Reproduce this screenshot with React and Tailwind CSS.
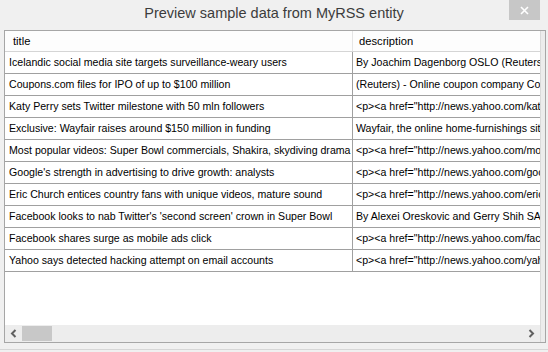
const rows = [
  ["Icelandic social media site targets surveillance-weary users", "By Joachim Dagenborg OSLO (Reuters) - An Icelandic social media site"],
  ["Coupons.com files for IPO of up to $100 million", "(Reuters) - Online coupon company Coupons.com Inc filed"],
  ["Katy Perry sets Twitter milestone with 50 mln followers", '<p><a href="http://news.yahoo.com/katy-perry-sets-twitter'],
  ["Exclusive: Wayfair raises around $150 million in funding", "Wayfair, the online home-furnishings site, has raised"],
  ["Most popular videos: Super Bowl commercials, Shakira, skydiving drama", '<p><a href="http://news.yahoo.com/most-popular-videos'],
  ["Google's strength in advertising to drive growth: analysts", '<p><a href="http://news.yahoo.com/googles-strength'],
  ["Eric Church entices country fans with unique videos, mature sound", '<p><a href="http://news.yahoo.com/eric-church-entices'],
  ["Facebook looks to nab Twitter's 'second screen' crown in Super Bowl", "By Alexei Oreskovic and Gerry Shih SAN FRANCISCO"],
  ["Facebook shares surge as mobile ads click", '<p><a href="http://news.yahoo.com/facebook-shares-surge'],
  ["Yahoo says detected hacking attempt on email accounts", '<p><a href="http://news.yahoo.com/yahoo-says-detected'],
];

export default function App() {
  return (
    <div className="w-[548px] h-[352px] bg-[#f0f0f0] relative overflow-hidden font-['Liberation_Sans',Arial,sans-serif]">
      {/* title bar */}
      <div className="h-[30px] flex items-center justify-center text-[14.5px] text-[#3c3c3c] pb-[2px]">
        Preview sample data from MyRSS entity
      </div>
      <div className="absolute top-0 right-[8px] w-[31px] h-[20px] bg-[#c7c7c7] flex items-center justify-center">
        <svg width="9" height="9" viewBox="0 0 9 9">
          <path d="M1 1 L8 8 M8 1 L1 8" stroke="#ffffff" strokeWidth="1.6" />
        </svg>
      </div>

      {/* grid */}
      <div className="ml-[4px] w-[542px] h-[313px] border border-[#a6a6a6] flex">
        <div className="w-[535px] flex flex-col min-w-0">
          <div className="flex-1 bg-white overflow-hidden text-[10.6px] text-black">
            <div className="flex h-[21px] bg-[#fdfdfd] border-b border-[#d5d5d5] text-[11.2px]">
              <div className="w-[348px] shrink-0 border-r border-[#e5e5e5] pl-[8px] flex items-center">title</div>
              <div className="flex-1 min-w-0 pl-[6px] flex items-center">description</div>
            </div>
            {rows.map((r, i) => (
              <div key={i} className="flex h-[22px] border-b border-[#a0a0a0]">
                <div className="w-[348px] shrink-0 border-r border-[#a0a0a0] pl-[4px] flex items-center whitespace-nowrap overflow-hidden">
                  {r[0]}
                </div>
                <div className="flex-1 min-w-0 pl-[3px] flex items-center whitespace-nowrap overflow-hidden">{r[1]}</div>
              </div>
            ))}
          </div>
          {/* horizontal scrollbar */}
          <div className="h-[17px] bg-[#ededed] flex items-center">
            <div className="w-[17px] flex items-center justify-center">
              <svg width="7" height="9" viewBox="0 0 7 9">
                <path d="M5.5 1 L2 4.5 L5.5 8" stroke="#606060" strokeWidth="2" fill="none" />
              </svg>
            </div>
            <div className="w-[30px] h-[15px] bg-[#c8c8c8]" />
            <div className="flex-1" />
            <div className="w-[17px] flex items-center justify-center">
              <svg width="7" height="9" viewBox="0 0 7 9">
                <path d="M1.5 1 L5 4.5 L1.5 8" stroke="#606060" strokeWidth="2" fill="none" />
              </svg>
            </div>
          </div>
        </div>
        <div className="flex-1 bg-[#ececec] border-l border-[#dadada]" />
      </div>
      <div className="mt-[6px] h-[1px] bg-[#d6d6d6]" />
    </div>
  );
}
